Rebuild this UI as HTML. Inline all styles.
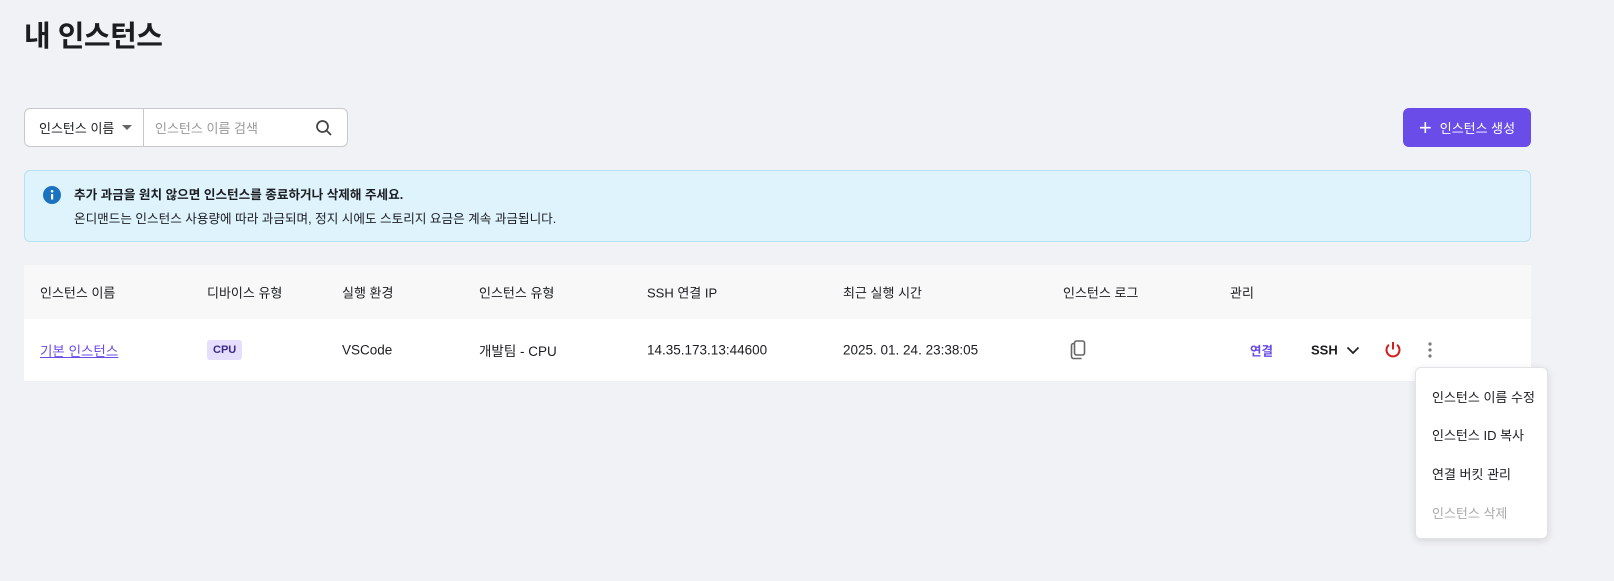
<!DOCTYPE html><html><head><meta charset="utf-8"><style>
*{box-sizing:border-box;margin:0;padding:0}
body{width:1614px;height:581px;background:#f1f2f6;font-family:"Liberation Sans","Noto Sans CJK KR",sans-serif;color:#1b1d21;position:relative;overflow:hidden}
.a{position:absolute}
h1{position:absolute;left:24px;top:13px;font-size:29px;font-weight:700;letter-spacing:-0.5px}
.search{left:24px;top:108px;width:324px;height:39px;border:1px solid #c8c9cd;border-radius:6px;background:#fff;display:flex;font-size:13px}
.sel{width:119px;border-right:1px solid #c8c9cd;display:flex;align-items:center;padding-left:14px;gap:8px}
.btn{left:1403px;top:108px;width:128px;height:39px;background:#6a4ce8;border-radius:6px;color:#fff;font-size:13px;display:flex;align-items:center;justify-content:center;gap:8px}
.alert{left:24px;top:170px;width:1507px;height:72px;background:#def3fc;border:1px solid #b8e1f4;border-radius:6px;font-size:12.6px}
.hd{left:24px;top:265px;width:1507px;height:54px;background:#f8f8f8;font-size:13px}
.row{left:24px;top:319px;width:1507px;height:62px;background:#fff;font-size:13.5px}
.c{position:absolute;top:50%;transform:translateY(-50%);white-space:nowrap}
.menu{left:1415px;top:367px;width:133px;height:172px;background:#fff;border:1px solid #e2e3e6;border-radius:6px;box-shadow:0 2px 8px rgba(0,0,0,.12);font-size:13px}
.menu div{position:absolute;left:16px}
</style></head><body>
<h1>내 인스턴스</h1>
<div class="a search"><div class="sel">인스턴스 이름 <span style="border:5px solid transparent;border-top:5px solid #666;margin-top:5px"></span></div>
<div style="flex:1;display:flex;align-items:center;padding-left:11px;color:#999;position:relative">인스턴스 이름 검색
<svg class="a" style="right:14px;top:10px" width="18" height="18" viewBox="0 0 18 18"><circle cx="7.5" cy="7.5" r="5.5" fill="none" stroke="#444" stroke-width="1.8"/><path d="M11.5 11.5L16 16" stroke="#444" stroke-width="1.8"/></svg></div></div>
<div class="a btn"><span style="font-size:22px;font-weight:300;line-height:1">+</span>인스턴스 생성</div>
<div class="a alert">
<svg class="a" style="left:18px;top:15px" width="18" height="18" viewBox="0 0 18 18"><circle cx="9" cy="9" r="9" fill="#1b72c0"/><rect x="8" y="8" width="2.2" height="5.5" fill="#fff"/><circle cx="9.1" cy="5.3" r="1.3" fill="#fff"/></svg>
<div class="a" style="left:49px;top:13px;font-weight:700">추가 과금을 원치 않으면 인스턴스를 종료하거나 삭제해 주세요.</div>
<div class="a" style="left:49px;top:37px">온디맨드는 인스턴스 사용량에 따라 과금되며, 정지 시에도 스토리지 요금은 계속 과금됩니다.</div></div>
<div class="a hd">
<span class="c" style="left:16px">인스턴스 이름</span><span class="c" style="left:183px">디바이스 유형</span><span class="c" style="left:318px">실행 환경</span><span class="c" style="left:455px">인스턴스 유형</span><span class="c" style="left:623px">SSH 연결 IP</span><span class="c" style="left:819px">최근 실행 시간</span><span class="c" style="left:1039px">인스턴스 로그</span><span class="c" style="left:1206px">관리</span></div>
<div class="a row">
<span class="c" style="left:16px;color:#6a4ce8;text-decoration:underline">기본 인스턴스</span>
<span class="c" style="left:183px;background:#e5defc;color:#3b2a8a;font-size:11px;font-weight:700;padding:4px 6px;border-radius:3px">CPU</span>
<span class="c" style="left:318px">VSCode</span><span class="c" style="left:455px">개발팀 - CPU</span><span class="c" style="left:623px">14.35.173.13:44600</span><span class="c" style="left:819px">2025. 01. 24. 23:38:05</span>
<svg class="c" style="left:1045px" width="20" height="22" viewBox="0 0 20 22"><path d="M5 4.5h-.5A2 2 0 0 0 2.5 6.5v11a2 2 0 0 0 2 2h8" fill="none" stroke="#666" stroke-width="1.6"/><rect x="5.5" y="2" width="10" height="14" rx="2" fill="none" stroke="#666" stroke-width="1.6"/></svg>
<span class="c" style="left:1226px;color:#6a4ce8;font-size:12.5px;font-weight:700">연결</span>
<span class="c" style="left:1287px;font-weight:700;font-size:13px">SSH</span>
<svg class="c" style="left:1322px" width="14" height="10" viewBox="0 0 14 10"><path d="M1.5 2.5L7 8l5.5-5.5" fill="none" stroke="#222" stroke-width="1.8"/></svg>
<svg class="c" style="left:1360px" width="18" height="18" viewBox="0 0 18 18"><path d="M5 3.8A6.5 6.5 0 1 0 13 3.8" fill="none" stroke="#d21f1f" stroke-width="2"/><path d="M9 1v7.5" stroke="#d21f1f" stroke-width="2"/></svg>
<svg class="c" style="left:1403px" width="6" height="18" viewBox="0 0 6 18"><circle cx="3" cy="3" r="1.6" fill="#777"/><circle cx="3" cy="9" r="1.6" fill="#777"/><circle cx="3" cy="15" r="1.6" fill="#777"/></svg>
</div>
<div class="a menu"><div style="top:19px">인스턴스 이름 수정</div><div style="top:57px">인스턴스 ID 복사</div><div style="top:96px">연결 버킷 관리</div><div style="top:135px;color:#aaa">인스턴스 삭제</div></div>
</body></html>
